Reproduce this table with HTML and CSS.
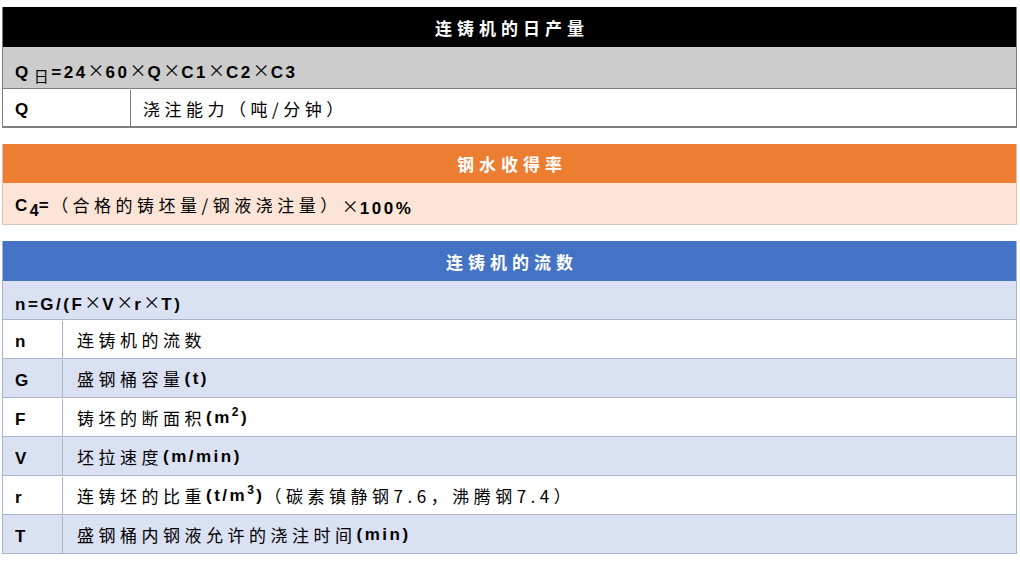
FILE: index.html
```html
<!DOCTYPE html>
<html lang="zh">
<head>
<meta charset="utf-8">
<link rel="stylesheet" href="styles.css">
</head>
<body>
<div class="page">
  <section class="tbl t-black">
    <div class="head">连铸机的日产量</div>
    <div class="row full gray"><span class="lat">Q<sub class="ri">日</sub>=24<span class="x">×</span>60<span class="x">×</span>Q<span class="x">×</span>C1<span class="x">×</span>C2<span class="x">×</span>C3</span></div>
    <div class="row two w1 white">
      <div class="c key lat">Q</div>
      <div class="c val">浇注能力（吨/分钟）</div>
    </div>
  </section>

  <section class="tbl t-orange">
    <div class="head">钢水收得率</div>
    <div class="row full peach"><span class="lat">C<sub class="sub4">4</sub>=</span><span class="zh">（合格的铸坯量/钢液浇注量）</span><span class="lat"><span class="x">×</span>100%</span></div>
  </section>

  <section class="tbl t-blue">
    <div class="head">连铸机的流数</div>
    <div class="row full light"><span class="lat">n=G/(F<span class="x">×</span>V<span class="x">×</span>r<span class="x">×</span>T)</span></div>
    <div class="row two w3 white"><div class="c key lat">n</div><div class="c val">连铸机的流数</div></div>
    <div class="row two w3 light"><div class="c key lat">G</div><div class="c val">盛钢桶容量<span class="lat">(t)</span></div></div>
    <div class="row two w3 white"><div class="c key lat">F</div><div class="c val">铸坯的断面积<span class="lat">(m<sup>2</sup>)</span></div></div>
    <div class="row two w3 light"><div class="c key lat">V</div><div class="c val">坯拉速度<span class="lat">(m/min)</span></div></div>
    <div class="row two w3 white"><div class="c key lat">r</div><div class="c val">连铸坯的比重<span class="lat">(t/m<sup>3</sup>)</span>（碳素镇静钢7.6，沸腾钢7.4）</div></div>
    <div class="row two w3 light"><div class="c key lat">T</div><div class="c val">盛钢桶内钢液允许的浇注时间<span class="lat">(min)</span></div></div>
  </section>
</div>
</body>
</html>
```
FILE: styles.css
```css
* { box-sizing: border-box; }
html, body { margin: 0; padding: 0; background: #ffffff; }
body {
  font-family: "Noto Sans CJK SC", "Liberation Sans", sans-serif;
  color: #000;
}
.page {
  padding: 7px 3px 0 2px;
  display: flex;
  flex-direction: column;
  gap: 16px;
}
.tbl {
  display: flex;
  flex-direction: column;
}
.head {
  height: 40px;
  display: flex;
  align-items: center;
  justify-content: center;
  font-size: 17px;
  font-weight: 700;
  letter-spacing: 5px;
  padding-left: 5px;
  color: #fff;
}
.row {
  height: 39px;
  display: flex;
  align-items: center;
  font-size: 17px;
  letter-spacing: 4.5px;
  padding-top: 1px;
}
.row.full { padding-left: 12px; }
.lat {
  font-family: "Liberation Sans", "Noto Sans CJK SC", sans-serif;
  font-weight: 700;
  letter-spacing: 2.5px;
  font-size: 17px;
  vertical-align: -2px;
}
.row.full > .lat { padding-top: 3px; }
.x {
  font-family: "Noto Sans CJK SC", sans-serif;
  font-weight: 400;
  letter-spacing: 1px;
  vertical-align: 1px;
}
.ri {
  font-family: "Noto Sans CJK SC", sans-serif;
  font-weight: 400;
  font-size: 15px;
  vertical-align: -4px;
  line-height: 0;
  margin: 0 0 0 3px;
}
.sub4 { font-size: 16px; vertical-align: -5px; line-height: 0; letter-spacing: 0; }
sup { font-size: 12px; vertical-align: 7px; line-height: 0; }
.row .c { height: 100%; display: flex; align-items: center; }
.row .key { padding-left: 12px; padding-top: 4px; }
.row .val { padding-left: 12px; }
.w1 .key { width: 128px; border-right: 1px solid #7f7f7f; }
.w3 .key { width: 60px; border-right: 1px solid #a9b5cc; }
.w3 .val { padding-left: 14px; }

/* table 1 */
.t-black { border-left: 1px solid #7f7f7f; border-right: 1px solid #7f7f7f; }
.t-black .head { background: #000; }
.t-black .gray { background: #cccccc; height: 42px; border-bottom: 1px solid #7f7f7f; }
.t-black .white { background: #fff; border-bottom: 2px solid #7f7f7f; }

/* table 2 */
.t-orange { border-left: 1px solid #d9c1b3; border-right: 1px solid #d9c1b3; }
.t-orange .head { background: #ed7d31; height: 39px; }
.t-orange .peach { background: #fce4d6; height: 42px; border-bottom: 1px solid #d7c6bb; }

/* table 3 */
.t-blue { border-left: 1px solid #a9b5cc; border-right: 1px solid #a9b5cc; }
.t-blue .head { background: #4472c4; }
.t-blue .row { border-bottom: 1px solid #a9b5cc; }
.t-blue .light { background: #d9e1f2; }
.t-blue .white { background: #fff; }
```
